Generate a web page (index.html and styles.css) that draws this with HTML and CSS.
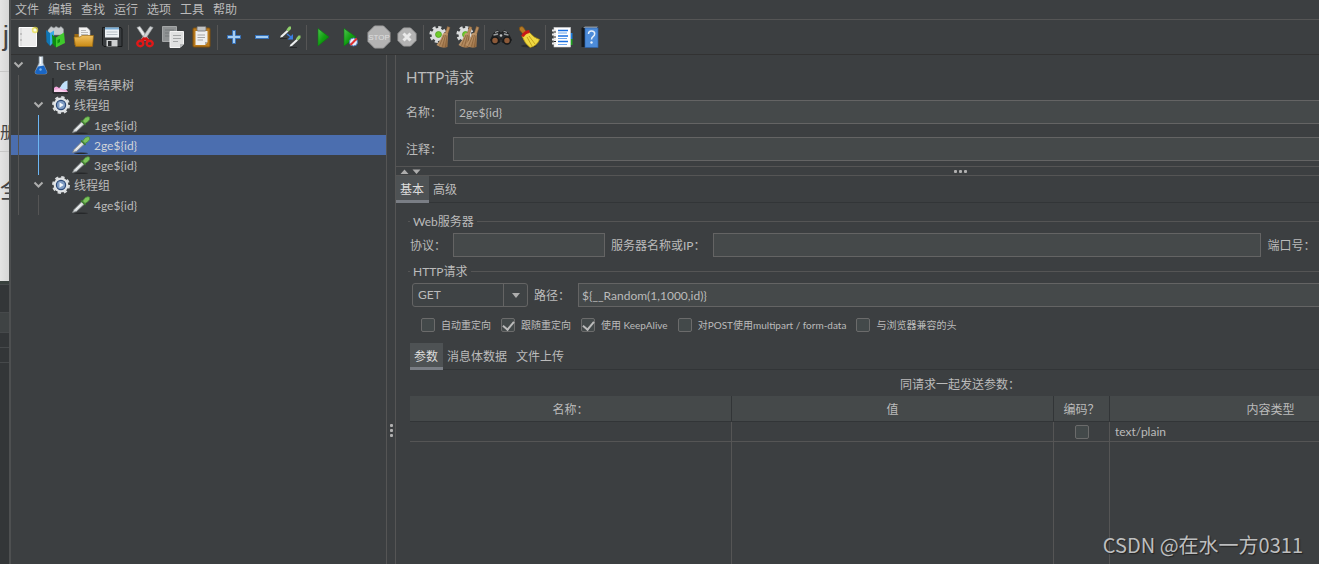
FILE: index.html
```html
<!DOCTYPE html>
<html lang="zh-CN">
<head>
<meta charset="utf-8">
<title>HTTP请求</title>
<link rel="stylesheet" href="styles.css">
</head>
<body>
<svg class="defs" width="0" height="0" aria-hidden="true">
  <defs>
    <linearGradient id="gFolder" x1="0" y1="0" x2="0" y2="1"><stop offset="0" stop-color="#f0c060"/><stop offset="1" stop-color="#c98a14"/></linearGradient>
    <linearGradient id="gPlay" x1="0" y1="0" x2="1" y2="1"><stop offset="0" stop-color="#4fc44f"/><stop offset=".5" stop-color="#12a012"/><stop offset="1" stop-color="#087008"/></linearGradient>
    <linearGradient id="gBroom" x1="0" y1="0" x2="1" y2="1"><stop offset="0" stop-color="#d8b48a"/><stop offset="1" stop-color="#94683c"/></linearGradient>
    <symbol id="pipette" viewBox="0 0 20 20">
      <ellipse cx="10" cy="18.300" rx="7" ry=".8" fill="#26282a"/>
      <path d="M1.500 17.500L3 14.500L11 6.500L13.500 9L5.500 16.500Z" fill="#d4d8da" stroke="#7b8082" stroke-width=".8"/>
      <path d="M4.500 14.800L10.500 9" stroke="#ffffff" stroke-width="1"/>
      <path d="M10 5.500L14.500 10" stroke="#3d7a2c" stroke-width="1.500"/>
      <path d="M11.500 6L14.500 2.500Q17.500 .8 18.700 2.500Q19 4.500 17 6.500L14 8.500Z" fill="#7cc35c" stroke="#4a8c38" stroke-width=".8"/>
    </symbol>
    <symbol id="gearblue" viewBox="0 0 20 20">
      <circle cx="10" cy="10" r="7.600" fill="none" stroke="#d5d8da" stroke-width="2.800" stroke-dasharray="3.200 2.770"/>
      <circle cx="10" cy="10" r="7.400" fill="#e0e3e5"/>
      <circle cx="10" cy="10" r="4.600" fill="#7f9cc4" stroke="#2c4a78" stroke-width="1.200"/>
      <path d="M8.500 7.200L12.700 10L8.500 12.800Z" fill="#f2f6fa"/>
    </symbol>
    <symbol id="chev" viewBox="0 0 20 20"><path d="M3.500 7.500L7.500 11.500L11.500 7.500" fill="none" stroke="#adadad" stroke-width="2"/></symbol>
    <symbol id="geargreen" viewBox="0 0 24 24">
      <circle cx="10" cy="9.500" r="7" fill="none" stroke="#d9dbdc" stroke-width="3.200" stroke-dasharray="3 2.500"/>
      <circle cx="10" cy="9.500" r="6.500" fill="#dcdede"/>
      <circle cx="10.500" cy="9.500" r="3" fill="#6fcb2c" stroke="#4b9b1c" stroke-width=".7"/>
    </symbol>
    <symbol id="broom" viewBox="0 0 24 24">
      <path d="M19.500 1.500L22 2.500L19.500 9.500L17 9Z" fill="#b98d5e" stroke="#8a6238" stroke-width=".5"/>
      <path d="M15 8.500Q17.500 7 20 9L19.500 22Q14 24 8.500 20Q13 15 15 8.500Z" fill="url(#gBroom)"/>
      <path d="M16 10L11.500 20.500M17.500 10L14.500 21.500M19 10.500L17.500 22" stroke="#79532c" stroke-width=".6" fill="none"/>
    </symbol>
  </defs>
</svg>
<div class="screen">
  <aside class="behind">
    <div class="peek peek-top"><span>j</span></div>
    <div class="peek peek-mid"><span>册</span></div>
    <div class="peek peek-low"><span>全</span></div>
    <div class="peek-dark"><i></i><i></i><i></i><i></i><i></i></div>
  </aside>
  <div class="app">
    <nav class="menubar">
      <button>文件</button><button>编辑</button><button>查找</button><button>运行</button><button>选项</button><button>工具</button><button>帮助</button>
    </nav>
    <div class="toolbar" role="toolbar">
      <button aria-label="新建"><svg viewBox="0 0 24 24"><path d="M3 2.500H18L20.500 5V21.500H3Z" fill="#ececec" stroke="#fff" stroke-width="1"/><path d="M5 3V21" stroke="#d2d2d2"/><circle cx="5" cy="9" r=".8" fill="#999"/><circle cx="5" cy="15" r=".8" fill="#999"/><circle cx="19" cy="5" r="3.200" fill="#e9e04a" opacity=".75"/><circle cx="19" cy="5" r="1.600" fill="#fffde0"/></svg></button>
      <button aria-label="模板"><svg viewBox="0 0 24 24"><path d="M4 5L7 1.500L10 3L12 1.500L15 3L17 1.500L19.500 4V10H4Z" fill="#c6cacc" stroke="#8f9395" stroke-width=".6"/><path d="M2 5L6 8V21L2.500 17Z" fill="#0f76b5"/><path d="M6 8L10 5.500V17L6 21Z" fill="#38a9e4"/><path d="M8 9.500L12 12.500V22.500L8.500 19Z" fill="#0d8c10"/><path d="M12 12.500L20 7.500L21 18L12 22.500Z" fill="#3fc92c"/><path d="M13.500 15L16 13.700V17L13.500 18.500Z" fill="#0e8f12"/></svg></button>
      <button aria-label="打开"><svg viewBox="0 0 24 24"><path d="M2.500 9H8L9 11H20V20H2.500Z" fill="#9c6a12"/><path d="M7 2.500H15L18 5.500V14H7Z" fill="#f2f2f2" stroke="#bbb" stroke-width=".6"/><path d="M9 5.500H14M9 7.500H16M9 9.500H16" stroke="#aaa" stroke-width=".8"/><path d="M2 12H8L10 10.500H21.500L20.500 21.500H3.500Z" fill="url(#gFolder)" stroke="#9c6a12" stroke-width=".7"/></svg></button>
      <button aria-label="保存"><svg viewBox="0 0 24 24"><path d="M2.500 2.500H21L22 4V21.500H4L2.500 20Z" fill="#393c3f" stroke="#17191a"/><rect x="5" y="2.500" width="14" height="10" fill="#eef2f5"/><path d="M5 3.500H19" stroke="#79aed8" stroke-width="2"/><path d="M6.500 7H17.500M6.500 9.500H17.500" stroke="#b8c0c6"/><rect x="6.500" y="15" width="11" height="6.500" fill="#cfd1d2"/><rect x="8" y="16" width="3.500" height="5" fill="#2b2d2f"/></svg></button>
      <span class="sep"></span>
      <button aria-label="剪切"><svg viewBox="0 0 24 24"><path d="M4 2.500L7 1.500L15.500 14L13 16Z" fill="#e6e8e9" stroke="#9da0a2" stroke-width=".7"/><path d="M20 2.500L17 1.500L8.500 14L11 16Z" fill="#cfd2d4" stroke="#9da0a2" stroke-width=".7"/><path d="M12 13L9 15.500M12 13L15 15.500" stroke="#d31212" stroke-width="3"/><ellipse cx="7.300" cy="18.500" rx="3" ry="2.700" fill="none" stroke="#e01818" stroke-width="2.400"/><ellipse cx="16.700" cy="18.500" rx="3" ry="2.700" fill="none" stroke="#e01818" stroke-width="2.400"/></svg></button>
      <button aria-label="复制"><svg viewBox="0 0 24 24"><path d="M1.500 1.500H15.500V16.500H1.500Z" fill="#8f9293" stroke="#a4a6a7"/><path d="M4 5H13M4 8H13M4 11H13" stroke="#75787a"/><path d="M9 6.500H22.500V19L19 22.500H9Z" fill="#e0e1e1" stroke="#f4f4f4"/><path d="M12 10.500H20M12 13.500H20M12 16.500H17" stroke="#a4a6a7"/><path d="M19 22.500V19H22.500Z" fill="#b6b8b9"/></svg></button>
      <button aria-label="粘贴"><svg viewBox="0 0 24 24"><rect x="4" y="3" width="17" height="19" rx="1" fill="#b97a1c" stroke="#80500c"/><path d="M6.500 6H18.500V17L16 20H6.500Z" fill="#eeeeee"/><path d="M8.500 10H16M8.500 12.500H16M8.500 15H14" stroke="#a4a4a4"/><path d="M16 20V17H18.500Z" fill="#aaa"/><rect x="8" y="1.500" width="9" height="4.500" rx="1" fill="#c0c2c3" stroke="#6e7071" stroke-width=".8"/></svg></button>
      <span class="sep"></span>
      <button aria-label="添加"><svg viewBox="0 0 24 24"><path d="M10.500 5.500H13.500V10.500H18.500V13.500H13.500V18.500H10.500V13.500H5.500V10.500H10.500Z" fill="#a4cdf2" stroke="#3671b8" stroke-width="1"/></svg></button>
      <button aria-label="删除"><svg viewBox="0 0 24 24"><rect x="5.500" y="10.500" width="13" height="3" fill="#a4cdf2" stroke="#3671b8" stroke-width="1"/></svg></button>
      <button aria-label="切换"><svg viewBox="0 0 24 24"><path d="M2 12.500L3 10.500L9 5L10.500 6.500L4.500 12Z" fill="#eceeef"/><path d="M8.500 4.500L11 1.500L13 1.500L13 4L10.500 6.500Z" fill="#8fd06c"/><path d="M11.500 21.500L12.500 19.500L18.500 14L20 15.500L14 21Z" fill="#eceeef"/><path d="M18 13.500L20.500 10.500L22.500 10.500L22.500 13L20 15.500Z" fill="#8fd06c"/><path d="M2 13.500H9M12 22.500H19" stroke="#26282a"/><path d="M9 9L13 12" stroke="#3b7de0" stroke-width="1.500"/><path d="M15 9V14.500H9.500Z" fill="#3b7de0"/></svg></button>
      <span class="sep"></span>
      <button aria-label="启动"><svg viewBox="0 0 24 24"><path d="M7 3.500L18 12L7 21Z" fill="url(#gPlay)" stroke="#0b7a10" stroke-width=".6"/></svg></button>
      <button aria-label="不停顿启动"><svg viewBox="0 0 24 24"><path d="M5 3.500L17 12L5 21Z" fill="url(#gPlay)" stroke="#0b7a10" stroke-width=".6"/><circle cx="14.500" cy="17" r="4" fill="#e8eefa" stroke="#4b78b8" stroke-width="1"/><path d="M11.500 20L17.800 13.500" stroke="#e03030" stroke-width="2"/></svg></button>
      <button aria-label="停止" disabled><svg viewBox="0 0 24 24"><path d="M7.500 1H16.500L23 7.500V16.500L16.500 23H7.500L1 16.500V7.500Z" fill="#b3b3b3" stroke="#9f9f9f"/><text x="12" y="15" class="stop-text">STOP</text></svg></button>
      <button aria-label="关闭" disabled><svg viewBox="0 0 24 24"><path d="M8.500 3H15.500L21 8.500V15.500L15.500 21H8.500L3 15.500V8.500Z" fill="#b3b3b3" stroke="#a2a2a2"/><path d="M8.500 8.500L15.500 15.500M15.500 8.500L8.500 15.500" stroke="#e9e9e9" stroke-width="3"/></svg></button>
      <span class="sep"></span>
      <button aria-label="清除"><svg viewBox="0 0 24 24"><use href="#geargreen" width="24" height="24"/><use href="#broom" width="24" height="24"/></svg></button>
      <button aria-label="清除全部"><svg viewBox="0 0 24 24"><use href="#geargreen" x="-1" width="24" height="24"/><use href="#broom" x="-6" width="24" height="24"/><use href="#broom" x="1" width="24" height="24"/></svg></button>
      <span class="sep"></span>
      <button aria-label="查找"><svg viewBox="0 0 24 24"><path d="M5 8L9 5L11 8H13L15 5L19 8L22.500 15L19 19L13 17V14H11V17L5 19L1.500 15Z" fill="#292b2d" stroke="#111" stroke-width=".7"/><path d="M6 7.500L9.500 6M14.500 6L18 7.500M4.500 10L9 9M15 9L19.500 10" stroke="#9a9d9f" stroke-width="1.300"/><circle cx="6" cy="15.500" r="3.500" fill="#8d5a39" stroke="#17191a" stroke-width="1.500"/><circle cx="18" cy="15.500" r="3.500" fill="#8d5a39" stroke="#17191a" stroke-width="1.500"/><circle cx="12" cy="10.500" r="1.300" fill="#c0c2c3"/></svg></button>
      <button aria-label="重置搜索"><svg viewBox="0 0 24 24"><ellipse cx="12" cy="21" rx="8" ry="1.500" fill="#2b2d2f"/><path d="M2.500 2.500Q5 .5 6.500 2.500L9.500 7L6 9L2.500 5Z" fill="#b57a26" stroke="#7b4e10" stroke-width=".7"/><path d="M5 11Q7 7 12.500 7.500Q17 13 22.500 14.500Q20 21 13 22.500Q8 19 5 11Z" fill="#efd841" stroke="#b5930f" stroke-width=".7"/><path d="M10 12L15 21M12 11L18 19" stroke="#bd9a17" stroke-width=".9"/><path d="M5.500 11.500Q7.500 7 12.500 6.500" stroke="#c81818" stroke-width="3" fill="none"/></svg></button>
      <span class="sep"></span>
      <button aria-label="函数助手"><svg viewBox="0 0 24 24"><rect x="16" y="8" width="6.500" height="6" fill="#1b7fe0"/><rect x="16" y="14" width="6.500" height="6" fill="#1ea21e"/><rect x="4" y="2.500" width="16.500" height="19.500" fill="#fff" stroke="#d2d4d5" stroke-width=".6"/><path d="M8 5.500H18M8 11H18M8 16.500H18" stroke="#1a6fe0" stroke-width="1.400"/><path d="M8 8H17M8 13.500H17M8 19.500H17" stroke="#6ba3ea" stroke-width="1.200"/><path d="M2 5.500H6M2 9.500H6M2 14.500H6M2 18.500H6" stroke="#e7e7e7" stroke-width="1.800"/><path d="M4 7H6M4 12H6M4 16.500H6" stroke="#222" stroke-width="1.200"/></svg></button>
      <button aria-label="帮助"><svg viewBox="0 0 24 24"><path d="M3.500 3L6 1.500H20V3H7V22H3.500Z" fill="#17191b"/><path d="M5 2.500L7 1.500H20L19 3H7Z" fill="#a2a7ac"/><rect x="7" y="3" width="13" height="19.500" fill="#4c8bd8" stroke="#2d63ac" stroke-width=".7"/><path d="M10.500 9Q10.500 6 13.500 6Q16.700 6 16.700 8.800Q16.700 10.500 15 11.700Q13.500 12.800 13.500 14.500" fill="none" stroke="#e4effa" stroke-width="1.500"/><circle cx="13.500" cy="17.500" r="1.200" fill="#e4effa"/></svg></button>
    </div>
    <div class="workspace">
      <div class="tree" role="tree">
        <div class="node" role="treeitem"><svg class="slot"><use href="#chev"/></svg><svg class="slot" viewBox="0 0 20 20"><path d="M8 1.500H12V8L16 17Q16 19 14 19H6Q4 19 4 17L8 8Z" fill="#d6e4f0" stroke="#8a9298" stroke-width=".7"/><path d="M7 11.500L13 10.500L16 17Q16 19 14 19H6Q4 19 4 17Z" fill="#1a66c4"/><path d="M9.500 2V9" stroke="#fff"/><circle cx="9.500" cy="14.500" r="1.200" fill="#79b4f0"/></svg><span>Test Plan</span></div>
        <div class="node" role="treeitem"><i class="guide"></i><i class="slot"></i><svg class="slot" viewBox="0 0 20 20"><path d="M2 3V18H17" stroke="#1d1f21" stroke-width="1" fill="none"/><path d="M3 17V13Q5 10 8 13L12 10L17 17Z" fill="#f3a8dc"/><path d="M9 13Q11 7 16.500 5.500V14Q13 16 9 13Z" fill="#bfe0fa"/><path d="M3 17V15L8 14L16 17Z" fill="#fad3ef"/></svg><span>察看结果树</span></div>
        <div class="node" role="treeitem"><i class="guide"></i><svg class="slot"><use href="#chev"/></svg><svg class="slot"><use href="#gearblue"/></svg><span>线程组</span></div>
        <div class="node" role="treeitem"><i class="guide"></i><i class="guide active"></i><i class="slot"></i><svg class="slot"><use href="#pipette"/></svg><span>1ge${id}</span></div>
        <div class="node selected" role="treeitem" aria-selected="true"><i class="guide"></i><i class="guide active"></i><i class="slot"></i><svg class="slot"><use href="#pipette"/></svg><span>2ge${id}</span></div>
        <div class="node" role="treeitem"><i class="guide"></i><i class="guide active"></i><i class="slot"></i><svg class="slot"><use href="#pipette"/></svg><span>3ge${id}</span></div>
        <div class="node" role="treeitem"><i class="guide"></i><svg class="slot"><use href="#chev"/></svg><svg class="slot"><use href="#gearblue"/></svg><span>线程组</span></div>
        <div class="node" role="treeitem"><i class="guide"></i><i class="guide"></i><i class="slot"></i><svg class="slot"><use href="#pipette"/></svg><span>4ge${id}</span></div>
      </div>
      <div class="vsplit"><i class="dot"></i><i class="dot"></i><i class="dot"></i></div>
      <main class="editor">
        <section class="head">
          <h1>HTTP请求</h1>
          <div class="line name"><label for="name">名称：</label><input id="name" type="text" value="2ge${id}"></div>
          <div class="line note"><label for="note">注释：</label><input id="note" type="text"></div>
        </section>
        <div class="hsplit">
          <svg class="arrows" viewBox="0 0 25 7"><path d="M4.500 6L8.500 1.500L12.500 6Z M16.500 1.500L20.500 6L24.500 1.500Z" fill="#adadad"/></svg>
          <span class="dots"><i class="dot"></i><i class="dot"></i><i class="dot"></i></span>
        </div>
        <div class="tabs"><button class="on">基本</button><button>高级</button></div>
        <div class="body">
          <section class="group">
            <h2><span>Web服务器</span></h2>
            <div class="line server">
              <label for="proto">协议：</label><input id="proto" class="proto" type="text">
              <label for="host">服务器名称或IP：</label><input id="host" class="host" type="text">
              <label for="port">端口号：</label><input id="port" class="port" type="text">
            </div>
          </section>
          <section class="group">
            <h2><span>HTTP请求</span></h2>
            <div class="line request">
              <span class="combo"><select id="method" aria-label="方法"><option>GET</option></select></span>
              <label for="path">路径：</label><input id="path" type="text" value="${__Random(1,1000,id)}">
            </div>
            <div class="checks">
              <label><input type="checkbox">自动重定向</label>
              <label><input type="checkbox" checked>跟随重定向</label>
              <label><input type="checkbox" checked>使用 KeepAlive</label>
              <label><input type="checkbox">对POST使用multipart / form-data</label>
              <label><input type="checkbox">与浏览器兼容的头</label>
            </div>
          </section>
          <div class="tabs inner"><button class="on">参数</button><button>消息体数据</button><button>文件上传</button></div>
          <p class="caption">同请求一起发送参数：</p>
          <table class="params">
            <colgroup><col class="c-wide"><col class="c-wide"><col class="c-enc"><col class="c-wide"><col></colgroup>
            <thead><tr><th>名称：</th><th>值</th><th>编码？</th><th>内容类型</th><th></th></tr></thead>
            <tbody>
              <tr class="data"><td></td><td></td><td class="mid"><input type="checkbox" aria-label="编码？"></td><td>text/plain</td><td></td></tr>
              <tr class="rest"><td></td><td></td><td></td><td></td><td></td></tr>
            </tbody>
          </table>
        </div>
      </main>
    </div>
  </div>
  <div class="watermark">CSDN @在水一方0311</div>
</div>
</body>
</html>
```
FILE: styles.css
```css
* { box-sizing: border-box; }
html, body { height: 100%; }
body {
  margin: 0;
  background: #3c3f41;
  color: #bbbbbb;
  font: 12px/16px Lato, "Noto Sans CJK SC", sans-serif;
  overflow: hidden;
}
button, input, select { font: inherit; color: inherit; margin: 0; }
button { border: 0; padding: 0; background: none; }
h1, h2, p { margin: 0; font-weight: 400; }
i { display: block; }
.defs { position: absolute; }

.screen { display: flex; height: 100vh; position: relative; overflow: hidden; }

/* strip of the window behind */
.behind { width: 11px; flex: none; display: flex; flex-direction: column; background: #333638; overflow: hidden; border-right: 2px solid #4e5051; }
.peek { display: flex; align-items: center; width: 11px; flex: none; color: #444444; overflow: hidden; background: linear-gradient(90deg, #e4e4e4, #d6d6d6); border-right: 2px solid #a3a3a3; border-bottom: 1px solid #c6c6c6; }
.peek-top { height: 72px; justify-content: flex-end; font: 28px/64px "Liberation Sans", sans-serif; }
.peek-mid { height: 80px; padding-top: 38px; font: 16px/16px "Noto Sans CJK SC", sans-serif; }
.peek-low { height: 129px; padding-bottom: 58px; font: 24px/24px "Noto Sans CJK SC", sans-serif; border-bottom: 0; }
.peek-dark { border-top: 3px solid #39413e; }
.peek-dark i { height: 15px; border-top: 1px solid #46494b; }
.peek-dark i:first-child { height: 28px; }
.peek-dark i:nth-child(2) { height: 20px; background: #3f4344; }

.app { flex: 1; min-width: 0; display: flex; flex-direction: column; }

.menubar { display: flex; gap: 9px; height: 20px; flex: none; padding-left: 4px; align-items: center; border-bottom: 1px solid #555555; }
.menubar button { line-height: 18px; }

.toolbar { display: flex; align-items: center; flex: none; height: 35px; padding-left: 3px; border-bottom: 1px solid #323232; }
.toolbar button { width: 28px; height: 28px; display: grid; place-items: center; }
.toolbar svg { width: 24px; height: 24px; display: block; }
.sep { width: 1px; height: 25px; margin: 0 2px; background: #555555; }
.stop-text { font: 8px "Liberation Sans", sans-serif; fill: #dedede; text-anchor: middle; }

.workspace { flex: 1; min-height: 0; display: flex; width: calc(100% + 205px); }

.tree { width: 375px; flex: none; }
.node { display: flex; height: 20px; align-items: center; }
.node span { padding: 2px 0 0 3px; white-space: nowrap; line-height: 18px; }
.slot { width: 20px; height: 20px; flex: none; }
.guide { width: 13px; height: 20px; margin-left: 7px; border-left: 1px solid #555555; }
.guide.active { border-left-color: #6cb6f5; }
.selected { background: #4b6eaf; }
.selected span { color: #d0d4da; }

.vsplit { width: 10px; flex: none; display: flex; flex-direction: column; align-items: center; gap: 2px; padding-top: 369px; border: solid #555555; border-width: 0 1px; }
.dot { width: 3px; height: 3px; border-radius: 1px; background: #b0b0b0; }

.editor { flex: 1; min-width: 0; display: flex; flex-direction: column; }
.head { padding: 12px 14px 5px 10px; border-bottom: 1px solid #555555; }
h1 { font-size: 15px; line-height: 20px; }
.line { display: flex; align-items: center; }
.line label { flex: none; white-space: nowrap; padding-top: 2px; }
input[type="text"] { height: 24px; min-width: 0; flex: 1; border: 1px solid #646464; border-radius: 0; background: #45494a; padding: 0 4px 0 3px; outline: 0; }
.name { margin-top: 13px; }
.name label { width: 49px; }
.note { margin-top: 13px; }
.note label { width: 47px; }

.hsplit { display: grid; grid-template-columns: 1fr auto 1fr; align-items: center; height: 9px; border-bottom: 1px solid #555555; }
.arrows { width: 25px; height: 7px; }
.dots { display: flex; gap: 2px; }

.tabs { display: flex; flex: none; height: 27px; border-bottom: 1px solid #323537; }
.tabs button { height: 27px; padding: 4px 5px 0 4px; border-bottom: 3px solid transparent; }
.tabs .on { background: #4e5254; border-bottom-color: #7a7e85; color: #dddddd; }

.body { flex: 1; min-height: 0; padding: 9px 14px 0 14px; display: flex; flex-direction: column; }
h2 { display: flex; align-items: center; gap: 3px; font-size: 12px; line-height: 16px; margin-left: -2px; }
h2 span { padding-top: 2px; }
h2::before { content: ""; width: 2px; height: 1px; background: #555555; }
h2::after { content: ""; flex: 1; height: 1px; background: #555555; }
.server { padding: 3px 0 5px; }
.server label:first-child { width: 43px; }
.server .proto { flex: 0 0 152px; margin-right: 6px; }
.server .host { margin: 0 7px; flex: 0 0 548px; }
.server .port { margin-left: 4px; }
.request { padding: 3px 0 0 2px; }
.request > label { margin: 0 8px 0 6px; }
.combo { position: relative; width: 116px; flex: none; }
.combo select { appearance: none; display: block; width: 100%; height: 24px; padding: 0 5px; border: 1px solid #646464; border-radius: 3px; background: #3f4345; outline: 0; }
.combo::after { content: ""; position: absolute; inset: 1px 1px 1px auto; width: 23px; border-left: 1px solid #646464; pointer-events: none; }
.combo::before { content: ""; position: absolute; right: 8px; top: 10px; border: solid transparent; border-top-color: #adadad; border-width: 5px 4px 0; }

.checks { display: flex; gap: 10px; padding: 11px 0 0 11px; font-size: 10px; line-height: 14px; }
.checks label { display: flex; align-items: center; gap: 6px; white-space: nowrap; }
input[type="checkbox"] { appearance: none; width: 14px; height: 14px; border: 1px solid #6b6b6b; border-radius: 2px; background: #43494a; display: inline-grid; place-items: center; }
input[type="checkbox"]:checked::before { content: ""; width: 5px; height: 9px; margin: 0 0 2px 1px; border: solid #bbbbbb; border-width: 0 2px 2px 0; transform: rotate(40deg); }

.inner { margin-top: 11px; }
.caption { text-align: center; line-height: 16px; padding: 7px 0 3px; }

.params { flex: 1; width: 100%; table-layout: fixed; border-collapse: separate; border-spacing: 0; display: table; }
.c-wide { width: 322px; }
.c-enc { width: 56px; }
.params th { height: 26px; padding: 3px 0 0; font-weight: 400; background: #45494a; border-right: 1px solid #323537; border-bottom: 1px solid #323537; }
.params td { padding: 0 5px; border-right: 1px solid #555555; }
.data td { height: 20px; border-bottom: 1px solid #555555; line-height: 18px; }
.params .mid { text-align: center; line-height: 0; }
.rest td { height: 200px; }

.watermark { position: absolute; right: 16px; bottom: 6px; font: 20px/26px "Noto Sans CJK SC", sans-serif; color: #bdbebf; text-shadow: 1px 1px 1px #222222; }
```
